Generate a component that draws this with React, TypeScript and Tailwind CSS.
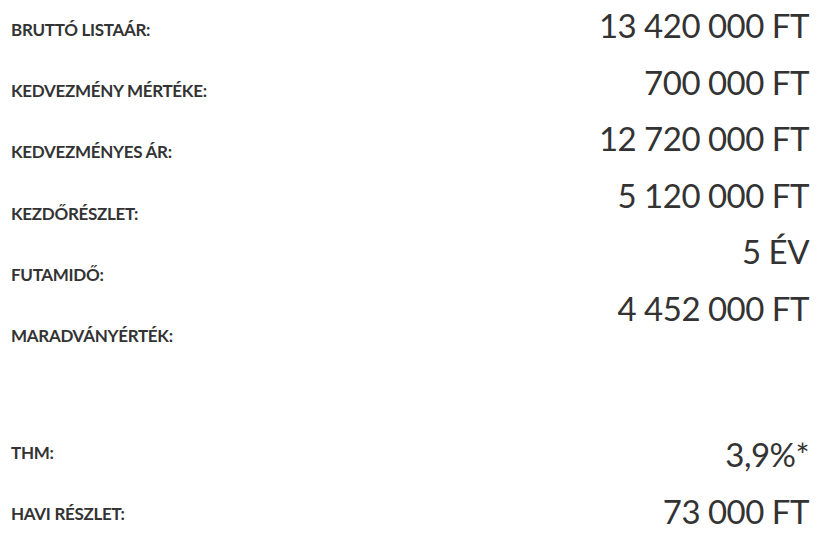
const top = [
  { label: "BRUTTÓ LISTAÁR:", value: "13 420 000 FT" },
  { label: "KEDVEZMÉNY MÉRTÉKE:", value: "700 000 FT" },
  { label: "KEDVEZMÉNYES ÁR:", value: "12 720 000 FT" },
  { label: "KEZDŐRÉSZLET:", value: "5 120 000 FT" },
  { label: "FUTAMIDŐ:", value: "5 ÉV" },
  { label: "MARADVÁNYÉRTÉK:", value: "4 452 000 FT" },
];

const bottom = [
  { label: "THM:", value: "3,9%*" },
  { label: "HAVI RÉSZLET:", value: "73 000 FT" },
];

type Row = { label: string; value: string };

function Section({ rows, className, valuesClass }: { rows: Row[]; className: string; valuesClass: string }) {
  return (
    <div className={`flex justify-between ${className}`}>
      <div className="flex flex-col">
        {rows.map((r) => (
          <div key={r.label} className="h-[61.2px] text-[17px] leading-[59px] font-bold tracking-[-0.3px]">
            {r.label}
          </div>
        ))}
      </div>
      <div className={`flex flex-col items-end ${valuesClass}`}>
        {rows.map((r) => (
          <div key={r.value} className="h-[56.6px] text-[33px] leading-[56.6px] font-normal tracking-[-0.5px]">
            {r.value}
          </div>
        ))}
      </div>
    </div>
  );
}

export default function App() {
  return (
    <div className="w-[827px] h-[542px] bg-white pl-[11px] pr-[18px] text-[#333] font-['Lato',sans-serif]">
      <Section rows={top} className="" valuesClass="-mt-[3px]" />
      <Section rows={bottom} className="mt-[56px]" valuesClass="mt-[3px]" />
    </div>
  );
}
